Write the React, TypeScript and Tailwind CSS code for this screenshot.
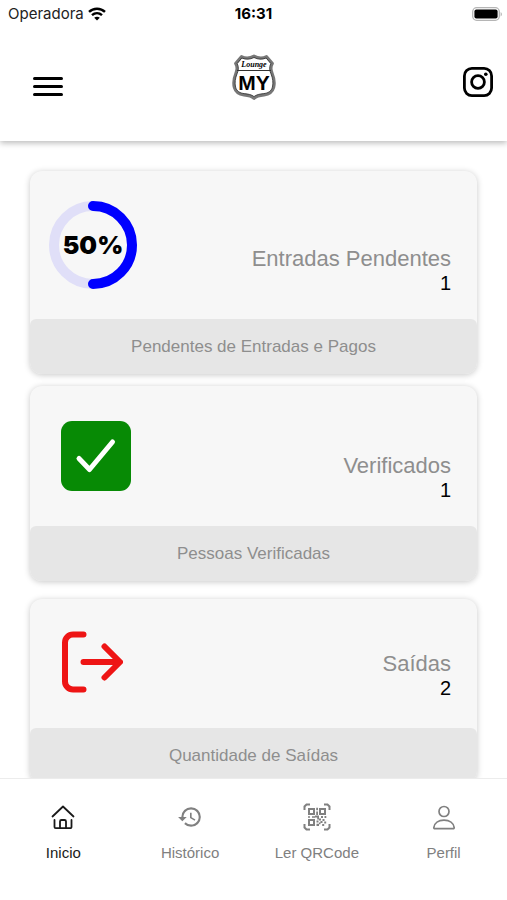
import type { ReactNode } from 'react'
import { MdHistory } from 'react-icons/md'

interface StatusCardProps {
  title: string
  value: number
  footer: string
  icon: ReactNode
  className?: string
  bodyClassName: string
}

interface NavItem {
  label: string
  icon: ReactNode
  active?: boolean
}

function WifiIcon() {
  return (
    <svg viewBox="0 0 18 14" className="h-[14px] w-[18px]" fill="none" stroke="black" strokeWidth="2.4">
      <path d="M1 4.900C5.400.6 12.600.6 17 4.900" />
      <path d="M4 8.200c2.900-2.700 7.100-2.700 10 0" />
      <path d="M9 13.600 6.200 10.800c1.600-1.400 4-1.400 5.600 0z" fill="black" stroke="none" />
    </svg>
  )
}

function BatteryIcon() {
  return (
    <svg viewBox="0 0 31 14" className="h-[14px] w-[31px]">
      <rect x="0.7" y="0.7" width="26.6" height="12.6" rx="4" fill="white" stroke="#b5b5b5" strokeWidth="1.3" />
      <rect x="2.4" y="2.4" width="23.2" height="9.2" rx="2" fill="black" />
      <path d="M28.600 5v4.400c1.800-.7 1.800-3.700 0-4.400z" fill="#b5b5b5" />
    </svg>
  )
}

function Logo() {
  return (
    <svg viewBox="0 0 44 46" className="h-[46px] w-[44px]" role="img" aria-label="Lounge MY">
      <path
        d="M9.500 2.500C13.500 4.500 18 4.200 22 2c4 2.200 8.500 2.500 12.500.5L40.500 9.500c-2.300 3.500-1.700 6.500-.2 10 1.900 4.500 2.600 9.500 1.500 14-1.300 5-5.300 7-9.800 7.500-4.200.4-7.600 1-10 3.500-2.400-2.500-5.800-3.100-10-3.500C7.500 40.500 3.500 38.500 2.200 33.500c-1.100-4.500-.4-9.500 1.500-14 1.500-3.500 2.100-6.500-.2-10z"
        fill="white"
        stroke="#777"
        strokeWidth="2.800"
        strokeLinejoin="round"
      />
      <path
        d="M9.800 4C13.800 5.800 18.200 5.500 22 3.500c3.800 2 8.200 2.300 12.200.5L38.800 9.600c-1.900 3.600-1.300 6.800.2 10.300 1.800 4.300 2.400 9 1.400 13.200-1.100 4.400-4.600 6-8.600 6.500-4 .4-7.400 1-9.800 3-2.400-2-5.800-2.600-9.800-3C8.200 39.100 4.700 37.500 3.600 33.100c-1-4.200-.4-8.900 1.400-13.200 1.500-3.500 2.100-6.700.2-10.300z"
        fill="none"
        stroke="#2b2b2b"
        strokeWidth="0.8"
      />
      <path d="M5 16.500h34" stroke="#333" strokeWidth="1.200" />
      <text x="22" y="13" textAnchor="middle" fontFamily="Liberation Serif, serif" fontSize="8" fontWeight="700" fontStyle="italic">
        Lounge
      </text>
      <text x="22" y="36" textAnchor="middle" fontFamily="Liberation Sans Narrow, Liberation Sans, sans-serif" fontSize="21" fontWeight="700">
        MY
      </text>
    </svg>
  )
}

function InstagramIcon() {
  return (
    <svg viewBox="0 0 32 32" className="size-8" fill="none" stroke="black" strokeWidth="2.800">
      <rect x="2.400" y="2.400" width="27.200" height="27.200" rx="7.500" />
      <circle cx="16" cy="16" r="6.400" />
      <circle cx="23.800" cy="8.200" r="1.800" fill="black" stroke="none" />
    </svg>
  )
}

// Progress ring, value between 0 and 100
function ProgressRing({ value }: { value: number }) {
  return (
    <svg viewBox="0 0 88 88" className="size-[88px]" fill="none" role="img" aria-label={`${value}%`}>
      <circle cx="44" cy="44" r="39" stroke="#e0dff8" strokeWidth="10" />
      <circle
        cx="44"
        cy="44"
        r="39"
        stroke="#0000ff"
        strokeWidth="10"
        strokeLinecap="round"
        pathLength="100"
        strokeDasharray={`${value} 100`}
        transform="rotate(-90 44 44)"
      />
      <text x="44" y="53" textAnchor="middle" fill="black" fontFamily="Inter, sans-serif" fontSize="25" fontWeight="900">
        {value}%
      </text>
    </svg>
  )
}

function CheckIcon() {
  return (
    <svg viewBox="0 0 70 70" className="size-[70px]" fill="none">
      <rect width="70" height="70" rx="11" fill="#078a05" />
      <path d="M18 37.500 28.500 48.500 51.500 21" stroke="white" strokeWidth="5" strokeLinecap="round" strokeLinejoin="round" />
    </svg>
  )
}

function ExitIcon() {
  return (
    <svg viewBox="0 0 62 62" className="size-[62px]" fill="none" stroke="#ee1515" strokeWidth="6" strokeLinecap="round" strokeLinejoin="round">
      <path d="M22.500 3.500H12A8 8 0 0 0 4 11.500v39a8 8 0 0 0 8 8H22.500" />
      <path d="M22.500 31H58M43.500 15.500 59 31l-15.500 15.500" />
    </svg>
  )
}

function HomeIcon() {
  return (
    <svg viewBox="0 0 28 28" className="size-7" fill="none" stroke="currentColor" strokeWidth="1.800" strokeLinecap="round" strokeLinejoin="round">
      <path d="M3.500 13.500 14 3.500l10.500 10" />
      <path d="M5.500 17V24a1.200 1.200 0 0 0 1.200 1.200h14.600A1.200 1.200 0 0 0 22.500 24V17" />
      <path d="M11 25V18.500a1.500 1.500 0 0 1 1.500-1.500h3a1.500 1.500 0 0 1 1.500 1.500V25" />
    </svg>
  )
}

function QrCodeIcon() {
  return (
    <svg viewBox="0 0 28 28" className="size-7" fill="none" stroke="currentColor" strokeWidth="2">
      <path d="M1.500 7V3.500l2-2H7M21 1.500h3.500l2 2V7M26.500 21v3.500l-2 2H21M7 26.500H3.500l-2-2V21" />
      <path d="M6 6h5v5H6zM17 6h5v5h-5zM6 17h5v5H6z" strokeWidth="2" />
      <path
        d="M13.200 4.800h1.800v2.500h-1.800zM13.200 8.500h1.800v3.500h-1.800zM5 13.200h2v1.600H5zM9 13.200h3v1.600H9zM12 12.500h4v4h-1.800v-2H12zM18 13h2v2h-2zM21.500 13h1.800v2h-1.800zM13.500 17.500h2v2h-2zM16 15.500h2v2h-2zM19.500 16h2v2h-2zM17.500 18h2v2h-2zM21.200 18.500h2v2h-2zM13.500 20.800h2.500v2.200h-2.500zM19.200 21h2v2h-2zM16 19.500h1.500v1.800H16z"
        fill="currentColor"
        stroke="none"
      />
    </svg>
  )
}

function PersonIcon() {
  return (
    <svg viewBox="0 0 28 28" className="size-7" fill="none" stroke="currentColor" strokeWidth="1.700">
      <circle cx="14" cy="8.500" r="5" />
      <path d="M4.800 25.700a1 1 0 0 1-1-1.100c.5-4.600 4.700-7.500 10.200-7.500s9.700 2.900 10.200 7.500a1 1 0 0 1-1 1.100z" />
    </svg>
  )
}

function StatusCard({ title, value, footer, icon, className = '', bodyClassName }: StatusCardProps) {
  return (
    <section className={`shrink-0 overflow-hidden rounded-xl bg-[#f7f7f7] shadow-[0_1px_6px_rgba(0,0,0,0.22)] ${className}`}>
      <div className={`flex items-start justify-between pr-[26px] ${bodyClassName}`}>
        {icon}
        <div className="self-end text-right text-[22px] leading-6">
          <h2 className="text-[#8e8e8e]">{title}</h2>
          <p className="text-xl leading-6 text-black">{value}</p>
        </div>
      </div>
      <p className="rounded-t-md bg-[#e6e6e6] py-4 text-center text-[17px] leading-[23px] text-[#8e8e8e]">{footer}</p>
    </section>
  )
}

const navItems: NavItem[] = [
  { label: 'Inicio', icon: <HomeIcon />, active: true },
  { label: 'Histórico', icon: <MdHistory className="size-7 p-px" /> },
  { label: 'Ler QRCode', icon: <QrCodeIcon /> },
  { label: 'Perfil', icon: <PersonIcon /> },
]

export default function App() {
  return (
    <div className="flex h-screen flex-col overflow-hidden bg-white font-['Liberation_Sans',Arial,sans-serif]">
      <header className="relative shrink-0 shadow-[0_2px_6px_rgba(0,0,0,0.28)]">
        {/* Status bar */}
        <div className="grid h-7 grid-cols-3 items-center px-2 font-['Inter',sans-serif] text-black">
          <div className="flex items-center gap-1 text-[15px] text-[#222]">
            Operadora
            <WifiIcon />
          </div>
          <span className="text-center text-[15px] font-bold">16:31</span>
          <div className="-mr-1 flex justify-end">
            <BatteryIcon />
          </div>
        </div>

        <div className="grid grid-cols-[1fr_auto_1fr] items-center px-3.5 pt-[26px] pb-[27px]">
          <button type="button" aria-label="Menu" className="ml-[19px] flex w-[30px] flex-col gap-[5px] pt-1">
            <span className="h-[3px] w-full rounded-full bg-black" />
            <span className="h-[3px] w-full rounded-full bg-black" />
            <span className="h-[3px] w-full rounded-full bg-black" />
          </button>
          <div className="pb-3.5">
            <Logo />
          </div>
          <a href="#instagram" aria-label="Instagram" className="-mr-px justify-self-end pb-1">
            <InstagramIcon />
          </a>
        </div>
      </header>

      {/* Cards */}
      <main className="flex min-h-0 flex-1 flex-col overflow-hidden px-[30px] pt-[30px]">
        <StatusCard
          title="Entradas Pendentes"
          value={1}
          footer="Pendentes de Entradas e Pagos"
          icon={<ProgressRing value={50} />}
          bodyClassName="min-h-[148px] pt-[30px] pb-6 pl-[19px]"
        />
        <StatusCard
          title="Verificados"
          value={1}
          footer="Pessoas Verificadas"
          icon={<CheckIcon />}
          className="mt-3"
          bodyClassName="min-h-[140px] pt-[35px] pb-6 pl-[31px]"
        />
        <StatusCard
          title="Saídas"
          value={2}
          footer="Quantidade de Saídas"
          icon={<ExitIcon />}
          className="mt-[18px]"
          bodyClassName="min-h-[129px] pt-8 pb-7 pl-[31px]"
        />
      </main>

      {/* Bottom tabs */}
      <nav className="grid shrink-0 grid-cols-4 border-t border-[#ececec] bg-white pt-6 pb-[37px]">
        {navItems.map((item) => (
          <a
            key={item.label}
            href={`#${item.label}`}
            className={`flex flex-col items-center gap-3 text-[15px] leading-5 ${item.active ? 'text-[#1a1a1a]' : 'text-[#808080]'}`}
          >
            {item.icon}
            {item.label}
          </a>
        ))}
      </nav>
    </div>
  )
}
